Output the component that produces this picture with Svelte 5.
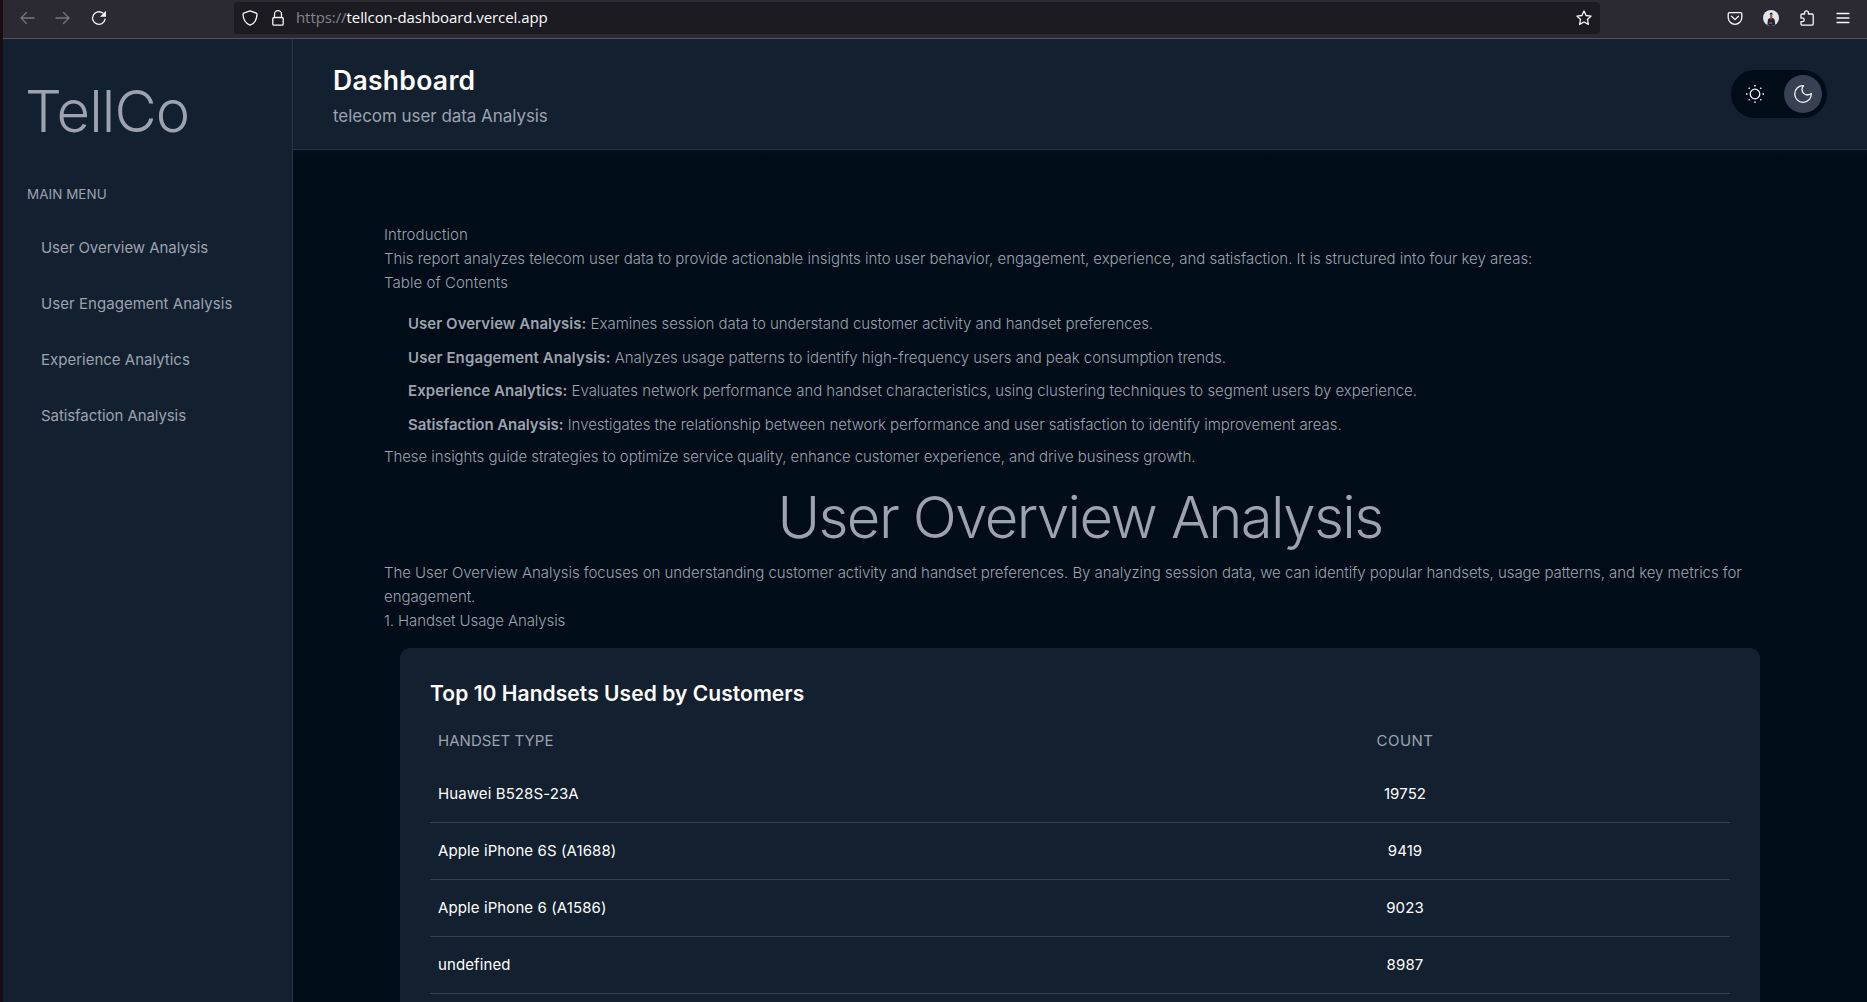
<script>
  const menu = [
    ['User Overview Analysis', 'w1'],
    ['User Engagement Analysis', 'w2'],
    ['Experience Analytics', 'w3'],
    ['Satisfaction Analysis', 'w4'],
  ];
  const contents = [
    ['User Overview Analysis:', 'Examines session data to understand customer activity and handset preferences.'],
    ['User Engagement Analysis:', 'Analyzes usage patterns to identify high-frequency users and peak consumption trends.'],
    ['Experience Analytics:', 'Evaluates network performance and handset characteristics, using clustering techniques to segment users by experience.'],
    ['Satisfaction Analysis:', 'Investigates the relationship between network performance and user satisfaction to identify improvement areas.'],
  ];
  const handsets = [
    ['Huawei B528S-23A', '19752'],
    ['Apple iPhone 6S (A1688)', '9419'],
    ['Apple iPhone 6 (A1586)', '9023'],
    ['undefined', '8987'],
  ];
</script>

<div class="window">
  <div class="chrome">
    <div class="nav-buttons">
      <svg class="dim" viewBox="0 0 16 16"><path d="M15 8H2M7.5 2.5 2 8l5.500 5.500" /></svg>
      <svg class="dim" viewBox="0 0 16 16"><path d="M1 8h13M8.500 2.500 14 8l-5.500 5.500" /></svg>
      <svg viewBox="0 0 16 16"><path d="M14.100 9.200A6.300 6.300 0 1 1 11.800 3.100" /><path class="solid" d="M15 .8v6H9z" /></svg>
    </div>
    <div class="address">
      <svg viewBox="0 0 16 16"><path d="M8 .9 14.300 3.100c.6.200.7.600.7 1.200C14.800 9.500 12.300 13.500 8 15.200 3.700 13.500 1.200 9.500 1 4.300c0-.6.1-1 .7-1.200z" /></svg>
      <svg viewBox="0 0 16 16"><path d="M4.500 7.500V4.200a3.500 3.500 0 0 1 7 0v3.300" /><rect x="2.800" y="7.500" width="10.400" height="7.700" rx="1.200" /></svg>
      <span class="url"><span class="scheme">https://</span>tellcon-dashboard.vercel.app</span>
      <svg class="star" viewBox="0 0 16 16"><path d="m8 1 2.100 4.500 5 .6-3.700 3.300 1 5L8 12l-4.400 2.400 1-5L.9 6.100l5-.6z" /></svg>
    </div>
    <div class="tools">
      <svg viewBox="0 0 16 16"><path d="M2.500 2.700h11a1.300 1.300 0 0 1 1.300 1.300v3.500a6.800 6.800 0 0 1-13.600 0V4a1.300 1.300 0 0 1 1.300-1.300z" /><path d="M4.500 6.300 8 9.600l3.500-3.300" /></svg>
      <svg viewBox="0 0 16 16">
        <circle class="av-bg" cx="8" cy="8" r="8" />
        <path class="av-body" d="M4.300 14.900 5 9.400l2-1.700h2.500l2.100 1.900.7 5.200A8 8 0 0 1 4.300 14.900z" />
        <path class="av-skin" d="M7.200 3.800h2.100v3.700L8.200 10.500 7 7.500zM6.200 12.500h3v1.200h-3z" />
        <path class="av-hair" d="M6.700 4.500c0-2.200 3-2.200 3 0L8 3.900z" />
      </svg>
      <svg viewBox="0 0 16 16"><path d="M2 5.200c0-.8.4-1.200 1.200-1.200h2.400V2.700a1.900 1.900 0 0 1 3.800 0V4h3.500c.9 0 1.300.4 1.300 1.300v8.600c0 .9-.4 1.300-1.300 1.300H3.200c-.8 0-1.200-.4-1.200-1.300v-2.300h1.500a1.700 1.700 0 0 0 0-3.400H2z" /></svg>
      <svg viewBox="0 0 16 16"><path d="M2 3.500h12M2 8h12M2 12.500h12" /></svg>
    </div>
  </div>

  <div class="page">
    <aside>
      <div class="brand">TellCo</div>
      <div class="label">MAIN MENU</div>
      <nav>
        {#each menu as [name, w]}
          <a class={w} href="#top">{name}</a>
        {/each}
      </nav>
    </aside>

    <div class="content">
      <header>
        <div>
          <div class="title">Dashboard</div>
          <div class="subtitle">telecom user data Analysis</div>
        </div>
        <div class="toggle">
          <div class="knob">
            <svg viewBox="0 0 18 18">
              <circle cx="9" cy="9" r="4.800" />
              <path class="rays" d="M9 0v1.500M9 16.500V18M0 9h1.500M16.500 9H18M2.700 2.700l1 1M14.300 14.300l1 1M2.700 15.300l1-1M14.300 3.700l1-1" />
            </svg>
          </div>
          <div class="knob on">
            <svg viewBox="0 0 18 18"><path d="M9.600.7A8.300 8.300 0 1 0 17.300 8.400 5 5 0 0 1 9.600.7z" /></svg>
          </div>
        </div>
      </header>

      <main>
        <p class="intro">Introduction</p>
        <p>This report analyzes telecom user data to provide actionable insights into user behavior, engagement, experience, and satisfaction. It is structured into four key areas:</p>
        <p class="intro">Table of Contents</p>
        <ul>
          {#each contents as [name, text]}
            <li><strong>{name}</strong> {text}</li>
          {/each}
        </ul>
        <p class="summary">These insights guide strategies to optimize service quality, enhance customer experience, and drive business growth.</p>
        <h1>User Overview Analysis</h1>
        <p>The User Overview Analysis focuses on understanding customer activity and handset preferences. By analyzing session data, we can identify popular handsets, usage patterns, and key metrics for engagement.</p>
        <p class="tight">1. Handset Usage Analysis</p>

        <section>
          <h2>Top 10 Handsets Used by Customers</h2>
          <div class="row head"><span>HANDSET TYPE</span><span class="count">COUNT</span></div>
          {#each handsets as [name, count]}
            <div class="row"><span>{name}</span><span>{count}</span></div>
          {/each}
        </section>
      </main>
    </div>
  </div>
</div>

<style>
  :global(body) { background: #000c17; overflow: hidden; }
  .window {
    box-sizing: border-box;
    width: 100%;
    height: 1002px;
    overflow: hidden;
    display: flex;
    flex-direction: column;
    border-left: 3px solid #190d14;
    font-family: Inter, "Liberation Sans", sans-serif;
    font-size: 15px;
    color: #9ca3af;
  }
  svg { display: block; flex: none; width: 16px; height: 16px; fill: none; stroke: #f7f7fa; stroke-width: 1.300; stroke-linejoin: round; stroke-linecap: round; }

  .chrome { box-sizing: border-box; flex: none; height: 39px; display: flex; align-items: center; padding-bottom: 2px; background: #2b2a33; border-bottom: 1px solid #55525d; }
  .nav-buttons { display: flex; gap: 20px; width: 231px; box-sizing: border-box; padding-left: 16px; }
  .dim { stroke: #77767d; }
  .solid { fill: #f7f7fa; stroke: none; }
  .address { box-sizing: border-box; width: 1366px; height: 32px; display: flex; align-items: center; padding: 0 8px; background: #1c1b22; border-radius: 4px; }
  .address svg + svg { margin-left: 12px; }
  .url { flex: 1; margin-left: 10px; padding-bottom: 2px; font: 15px/20px "Open Sans", sans-serif; letter-spacing: -0.080px; color: #fbfbfe; }
  .scheme { color: #85848b; }
  .tools { display: flex; gap: 20px; margin-left: 127px; }
  .av-bg { fill: #e3e5ea; stroke: none; }
  .av-body { fill: #1d2533; stroke: none; }
  .av-skin { fill: #9c5f49; stroke: none; }
  .av-hair { fill: #17171c; stroke: none; }

  .page { flex: 1; min-height: 0; display: flex; }
  aside { box-sizing: border-box; flex: none; width: 290px; padding: 36px 24px 0; background: #132030; border-right: 1px solid #283546; }
  .brand { font-size: 58px; line-height: 72px; font-weight: 350; letter-spacing: -0.900px; margin-left: -2px; }
  .label { margin-top: 37px; font-size: 13.400px; line-height: 20px; letter-spacing: 0.080px; }
  nav { display: flex; flex-direction: column; gap: 32px; margin-top: 32px; padding-left: 14px; }
  nav a { color: inherit; text-decoration: none; line-height: 24px; }
  .w1 { letter-spacing: -0.050px; }
  .w2 { letter-spacing: 0.050px; }
  .w4 { letter-spacing: -0.080px; }

  .content { flex: 1; min-width: 0; display: flex; flex-direction: column; }
  header { box-sizing: border-box; flex: none; height: 111px; display: flex; justify-content: space-between; align-items: flex-start; padding: 22px 40px 0; background: #132030; border-bottom: 1px solid #283546; }
  .title { font-size: 26.500px; line-height: 38px; font-weight: 600; letter-spacing: 0.300px; color: #fff; }
  .subtitle { margin-top: 5px; font-size: 17px; line-height: 24px; letter-spacing: -0.050px; }
  .toggle { box-sizing: border-box; width: 96px; height: 48px; margin-top: 9px; padding: 5px; display: flex; justify-content: space-between; border-radius: 24px; background: #000c17; }
  .knob { width: 38px; height: 38px; display: flex; align-items: center; justify-content: center; border-radius: 50%; }
  .knob.on { background: #374151; }
  .knob svg { width: 18px; height: 18px; stroke-width: 1.300; }
  .knob .rays { stroke-width: 1.400; stroke-linecap: butt; }

  main { flex: 1; min-height: 0; overflow: hidden; padding: 73px 91px 0; font-weight: 300; line-height: 24px; letter-spacing: -0.040px; background: linear-gradient(#02101c, #000c17 12px); }
  p { margin: 0; letter-spacing: -0.050px; }
  p:nth-of-type(2) { letter-spacing: -0.020px; }
  p.intro { letter-spacing: 0.060px; }
  p.summary { letter-spacing: -0.070px; }
  p.tight { letter-spacing: -0.100px; }
  ul { list-style: none; margin: 17px 0 8px; padding: 0 0 0 24px; display: flex; flex-direction: column; gap: 9.600px; }
  strong { font-weight: 600; letter-spacing: 0.040px; }
  li:nth-child(2) strong { letter-spacing: 0.110px; }
  li:nth-child(3) strong { letter-spacing: 0.060px; }
  li:nth-child(4) strong { letter-spacing: -0.060px; }
  li:nth-child(4) { letter-spacing: -0.030px; }
  h1 { margin: 12px 0 8px; text-align: center; font-size: 58px; line-height: 72px; font-weight: 350; letter-spacing: -1.600px; }
  section { margin: 15px 16px 0; padding: 31px 30px 20px; border-radius: 10px; background: #132030; font-weight: 400; color: #fff; }
  h2 { margin: 0; font-size: 21px; line-height: 30px; font-weight: 600; letter-spacing: 0.060px; }
  .row { display: grid; grid-template-columns: 1fr 1fr; padding: 16px 0; border-bottom: 1px solid #374151; letter-spacing: 0.100px; }
  .row span { padding: 0 8px; }
  .row span:last-child { text-align: center; }
  .head { padding: 20px 0 13px; border-bottom: 0; color: #9ca3af; letter-spacing: 0.050px; }
  .head .count { letter-spacing: 0.450px; }
</style>
